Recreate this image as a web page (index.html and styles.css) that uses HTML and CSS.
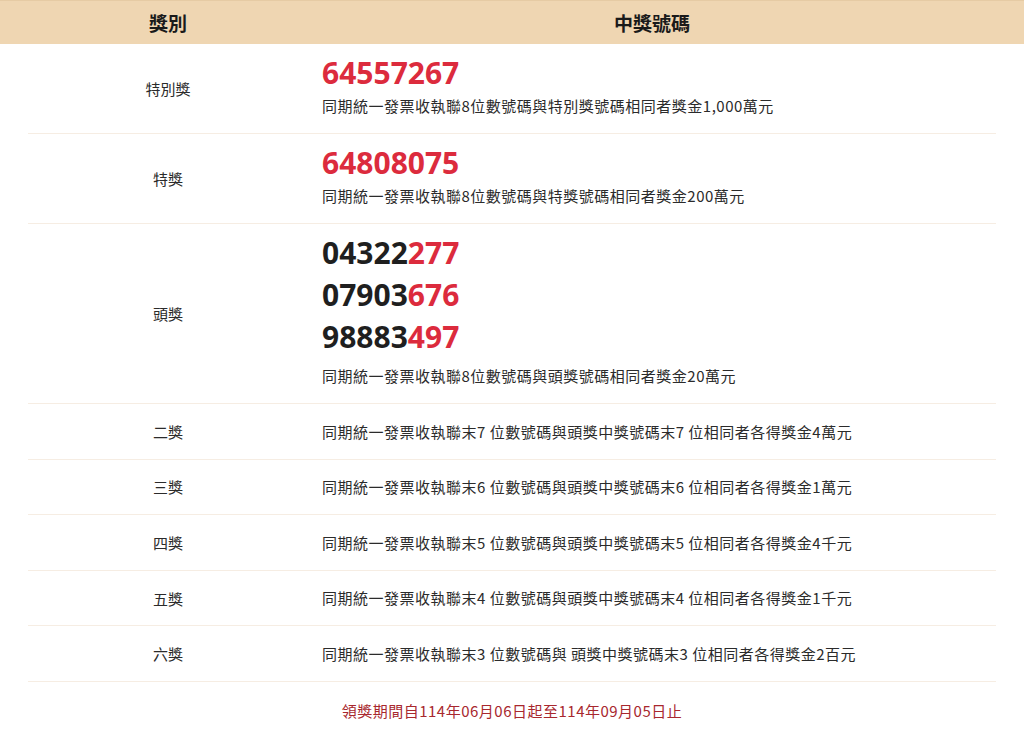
FILE: index.html
```html
<!DOCTYPE html>
<html lang="zh-Hant">
<head>
<meta charset="utf-8">
<title>統一發票中獎號碼</title>
<link rel="stylesheet" href="styles.css">
</head>
<body>
<div class="head">
  <div class="h-label">獎別</div>
  <div class="h-content">中獎號碼</div>
</div>
<div class="table">
  <div class="row">
    <div class="label">特別獎</div>
    <div class="content">
      <div class="num red">64557267</div>
      <div class="desc">同期統一發票收執聯8位數號碼與特別獎號碼相同者獎金1,000萬元</div>
    </div>
  </div>
  <div class="row">
    <div class="label">特獎</div>
    <div class="content">
      <div class="num red">64808075</div>
      <div class="desc">同期統一發票收執聯8位數號碼與特獎號碼相同者獎金200萬元</div>
    </div>
  </div>
  <div class="row">
    <div class="label">頭獎</div>
    <div class="content">
      <div class="nums">
        <div class="num">04322<span class="red">277</span></div>
        <div class="num">07903<span class="red">676</span></div>
        <div class="num">98883<span class="red">497</span></div>
      </div>
      <div class="desc">同期統一發票收執聯8位數號碼與頭獎號碼相同者獎金20萬元</div>
    </div>
  </div>
  <div class="row simple">
    <div class="label">二獎</div>
    <div class="content"><div class="desc">同期統一發票收執聯末7 位數號碼與頭獎中獎號碼末7 位相同者各得獎金4萬元</div></div>
  </div>
  <div class="row simple">
    <div class="label">三獎</div>
    <div class="content"><div class="desc">同期統一發票收執聯末6 位數號碼與頭獎中獎號碼末6 位相同者各得獎金1萬元</div></div>
  </div>
  <div class="row simple">
    <div class="label">四獎</div>
    <div class="content"><div class="desc">同期統一發票收執聯末5 位數號碼與頭獎中獎號碼末5 位相同者各得獎金4千元</div></div>
  </div>
  <div class="row simple">
    <div class="label">五獎</div>
    <div class="content"><div class="desc">同期統一發票收執聯末4 位數號碼與頭獎中獎號碼末4 位相同者各得獎金1千元</div></div>
  </div>
  <div class="row simple">
    <div class="label">六獎</div>
    <div class="content"><div class="desc">同期統一發票收執聯末3 位數號碼與 頭獎中獎號碼末3 位相同者各得獎金2百元</div></div>
  </div>
  <div class="footer">領獎期間自114年06月06日起至114年09月05日止</div>
</div>
</body>
</html>
```
FILE: styles.css
```css
html, body {
  margin: 0;
  padding: 0;
  background: #ffffff;
}
body {
  font-family: "Noto Sans CJK TC", "Noto Sans", sans-serif;
  color: #2b2b2b;
}
.head {
  display: flex;
  height: 44px;
  align-items: center;
  padding: 0 28px;
  background: #efd6b2;
  border-top: 1px solid #e6cba4;
  box-sizing: border-box;
  font-weight: 700;
  font-size: 19px;
  color: #1a1a1a;
}
.h-label {
  width: 280px;
  text-align: center;
}
.h-content {
  flex: 1;
  text-align: center;
}
.table {
  margin: 0 28px;
}
.row {
  display: flex;
  align-items: center;
  border-bottom: 1px solid #f6ede3;
}
.label {
  width: 280px;
  flex: none;
  text-align: center;
  font-size: 15px;
  color: #2b2b2b;
}
.content {
  flex: 1;
  padding: 8px 14px 15px;
}
.row.simple .content {
  padding: 15.6px 14px 15px;
}
.num {
  font-family: "Noto Sans", "Noto Sans CJK TC", sans-serif;
  font-weight: 700;
  font-size: 30px;
  line-height: 42px;
  color: #1f1f1f;
}
.red {
  color: #dc2b3d;
}
.nums {
  margin-bottom: 6px;
}
.desc {
  font-size: 15px;
  line-height: 24px;
  letter-spacing: 0.5px;
  color: #2b2b2b;
}
.footer {
  text-align: center;
  padding: 17px 0 12px;
  font-size: 15px;
  line-height: 24px;
  letter-spacing: 0.5px;
  color: #a8282e;
}
```
